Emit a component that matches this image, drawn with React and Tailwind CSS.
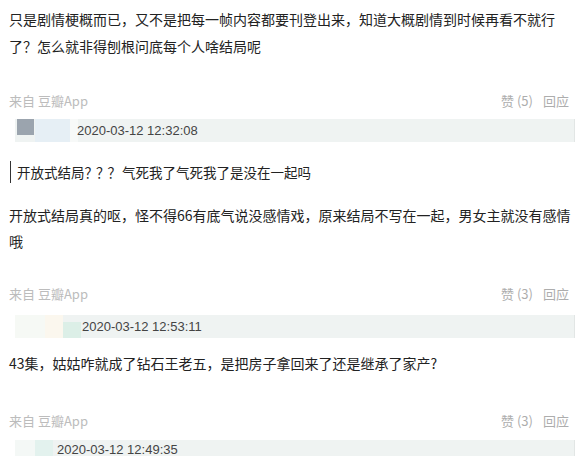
import React from "react";

const font = { fontFamily: '"Noto Sans CJK SC", "Noto Sans", sans-serif' };

function Meta({ likes, className = "" }) {
  return (
    <div className={`flex items-center justify-between h-[20px] pl-[9px] pr-[10px] text-[13px] ${className}`}>
      <span className="text-[#bcbcbc]">来自 豆瓣App</span>
      <span className="text-[#adadad] flex gap-[10px]">
        <span>赞 ({likes})</span>
        <span>回应</span>
      </span>
    </div>
  );
}

function Patches({ variant }) {
  if (variant === 1)
    return (
      <>
        <div className="self-start ml-[2px] w-[17px] h-[16px] bg-[#9ba4ae]" />
        <div className="ml-[1px] w-[35px] h-full bg-[#e6eff5]" />
        <div className="w-[8px] h-full bg-[#f7f9f8]" />
      </>
    );
  if (variant === 2)
    return (
      <>
        <div className="w-[30px] h-full bg-[#f6f9f5]" />
        <div className="w-[18px] h-full bg-[#fbf7ee]" />
        <div className="self-end w-[18px] h-[16px] bg-[#dcefe7]" />
      </>
    );
  return (
    <>
      <div className="w-[20px] h-full bg-[#f4f8f6]" />
      <div className="w-[18px] h-full bg-[#e3f2ee]" />
    </>
  );
}

function Bar({ time, variant, className = "" }) {
  const offset = variant === 1 ? "ml-[-1px]" : variant === 2 ? "ml-[1px]" : "ml-[4px]";
  return (
    <div className={`flex items-center ml-[15px] mr-[4px] bg-[#eff3f2] border-r border-[#e2e6e5] ${className}`}>
      <Patches variant={variant} />
      <span
        className={`text-[13px] leading-[16px] text-[#444] ${offset}`}
        style={{ fontFamily: '"Liberation Sans", Arial, sans-serif' }}
      >
        {time}
      </span>
    </div>
  );
}

export default function App() {
  return (
    <div className="w-[579px] h-[456px] overflow-hidden bg-white text-[#222]" style={font}>
      <div className="pt-[6px] pl-[9px] text-[14px] leading-[27px] whitespace-nowrap">
        只是剧情梗概而已，又不是把每一帧内容都要刊登出来，知道大概剧情到时候再看不就行
        <br />
        了？怎么就非得刨根问底每个人啥结局呢
      </div>
      <Meta likes="5" className="mt-[31px]" />
      <Bar time="2020-03-12 12:32:08" variant={1} className="mt-[8px] h-[23px]" />

      <div className="mt-[19px] ml-[10px] pl-[6px] border-l border-[#333] text-[13.5px] leading-[22px] whitespace-nowrap">
        开放式结局<span className="tracking-[-2px]">？？？</span> 气死我了气死我了是没在一起吗
      </div>

      <div className="mt-[19px] pl-[9px] text-[14px] leading-[26px] whitespace-nowrap">
        开放式结局真的呕，怪不得66有底气说没感情戏，原来结局不写在一起，男女主就没有感情
        <br />
        哦
      </div>
      <Meta likes="3" className="mt-[30px]" />
      <Bar time="2020-03-12 12:53:11" variant={2} className="mt-[11px] h-[23px]" />

      <div className="mt-[12px] pl-[9px] text-[14px] leading-[26px] whitespace-nowrap">
        43集，姑姑咋就成了钻石王老五，是把房子拿回来了还是继承了家产?
      </div>
      <Meta likes="3" className="mt-[35px]" />
      <Bar time="2020-03-12 12:49:35" variant={3} className="mt-[9px] h-[19px]" />
    </div>
  );
}
